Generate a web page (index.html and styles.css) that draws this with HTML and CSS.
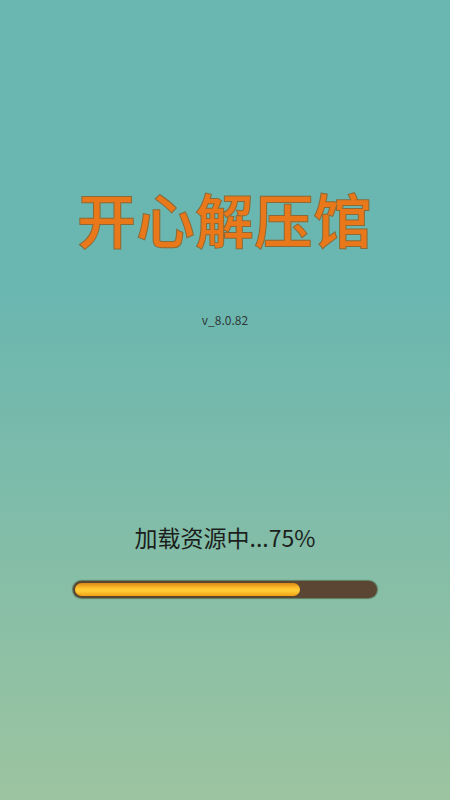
FILE: index.html
```html
<!DOCTYPE html>
<html lang="zh">
<head>
<meta charset="utf-8">
<link rel="stylesheet" href="styles.css">
</head>
<body>
<div class="screen">
  <h1 class="title">开心解压馆</h1>
  <div class="version">v_8.0.82</div>
  <div class="loading">加载资源中...75%</div>
  <div class="track"><div class="fill" style="width:75%"></div></div>
</div>
</body>
</html>
```
FILE: styles.css
```css
html, body { margin: 0; padding: 0; }
body {
  width: 450px;
  height: 800px;
  overflow: hidden;
  font-family: "Noto Sans CJK SC", "Noto Sans", sans-serif;
}
.screen {
  height: 800px;
  box-sizing: border-box;
  display: flex;
  flex-direction: column;
  align-items: center;
  padding-top: 180px;
  background: linear-gradient(180deg, #6ab6b0 0%, #6ab6b0 36%, #9cc4a0 100%);
}
.title {
  margin: 0;
  font-size: 58px;
  line-height: 76px;
  font-weight: 500;
  color: #e8781a;
  -webkit-text-stroke: 2px #8a6a38;
  paint-order: stroke fill;
  letter-spacing: 1px;
}
.version {
  margin-top: 56px;
  font-size: 12px;
  line-height: 16px;
  color: #2e3a38;
}
.loading {
  margin-top: 194px;
  font-size: 23px;
  line-height: 30px;
  color: #1c1f1c;
}
.track {
  margin-top: 29px;
  width: 300px;
  height: 13px;
  padding: 2px;
  border-radius: 9px;
  background: #5a4632;
  box-shadow: 0 0 1px 1px #5e7a5e;
}
.fill {
  height: 100%;
  border-radius: 7px;
  background: linear-gradient(180deg, #d98a14 0%, #ffc22e 40%, #ffce3a 60%, #f0a010 100%);
}
```
